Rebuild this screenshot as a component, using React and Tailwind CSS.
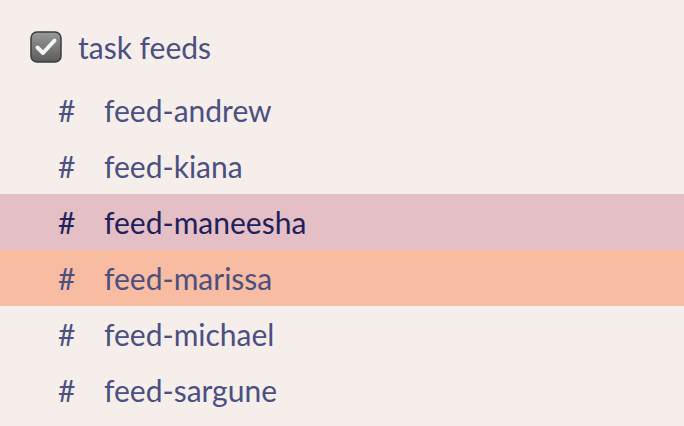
const feeds = [
  { name: 'feed-andrew' },
  { name: 'feed-kiana' },
  { name: 'feed-maneesha', state: 'active' },
  { name: 'feed-marissa', state: 'hover' },
  { name: 'feed-michael' },
  { name: 'feed-sargune' },
];

function CheckIcon() {
  return (
    <svg width="32" height="32" viewBox="0 0 32 32">
      <defs>
        <linearGradient id="cb" x1="0" y1="0" x2="0" y2="1">
          <stop offset="0" stopColor="#9a9a9a" />
          <stop offset="1" stopColor="#5a5a5a" />
        </linearGradient>
      </defs>
      <rect x="1" y="1" width="30" height="30" rx="6" fill="url(#cb)" stroke="#3c3c3c" strokeWidth="1.5" />
      <path d="M7.5 16.5 L13 22 L24.5 9.5" fill="none" stroke="#f4f4f4" strokeWidth="4" strokeLinecap="round" strokeLinejoin="round" />
    </svg>
  );
}

export default function App() {
  return (
    <div className="w-[684px] h-[426px] bg-[#f5eeeb] overflow-hidden pt-[19px]" style={{ fontFamily: 'Lato, "Open Sans", sans-serif' }}>
      {/* Header */}
      <div className="h-[56px] flex items-center pl-[30px] gap-[16px]">
        <CheckIcon />
        <span className="text-[30px] text-[#4b5080] leading-none">task feeds</span>
      </div>

      {/* Channels */}
      <div className="mt-[7px]">
        {feeds.map((f) => (
          <div
            key={f.name}
            className={
              'h-[56px] flex items-center text-[30px] leading-none ' +
              (f.state === 'active'
                ? 'bg-[#e5bfc6] text-[#1d2259]'
                : f.state === 'hover'
                ? 'bg-[#f7bca2] text-[#4b5080]'
                : 'text-[#4b5080]')
            }
          >
            <span className="w-[46px] pl-[58px] box-content">#</span>
            <span>{f.name}</span>
          </div>
        ))}
      </div>
    </div>
  );
}
